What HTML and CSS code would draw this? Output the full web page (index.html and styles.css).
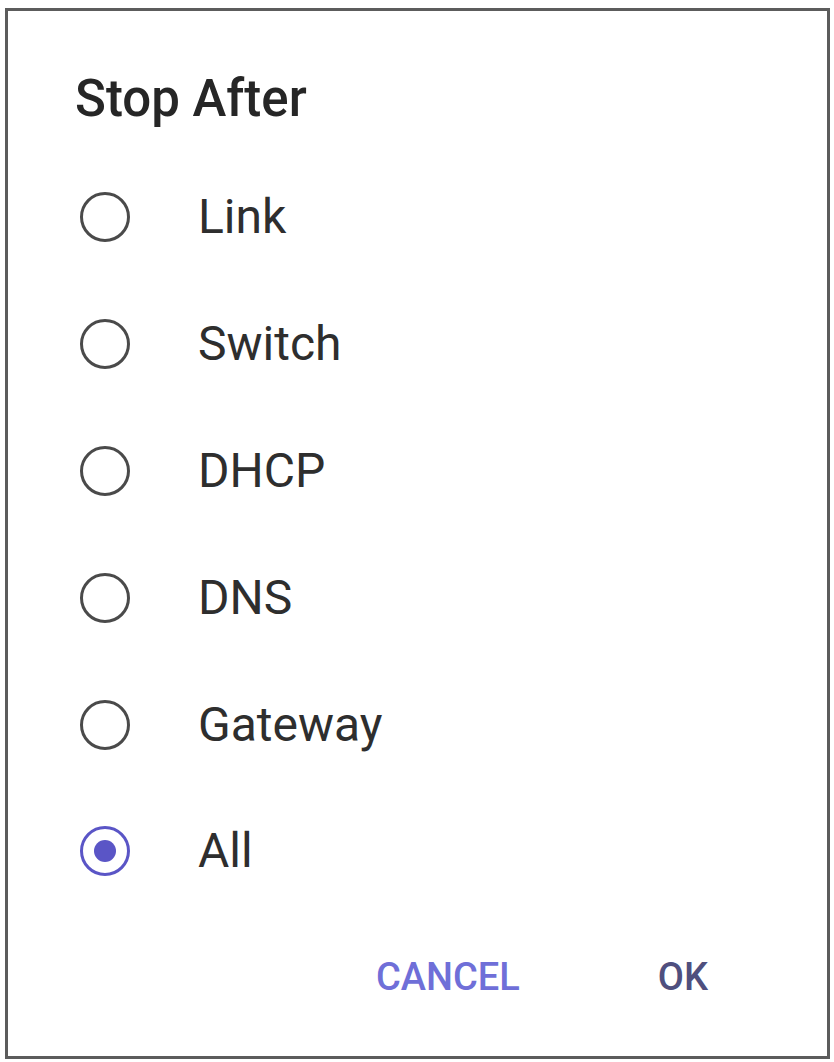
FILE: index.html
```html
<!DOCTYPE html>
<html lang="en">
<head>
<meta charset="utf-8">
<title>Stop After</title>
<link rel="stylesheet" href="styles.css">
</head>
<body>
<div class="dialog">
  <h1 class="title">Stop After</h1>
  <ul class="options">
    <li class="option"><span class="radio"></span><span class="label">Link</span></li>
    <li class="option"><span class="radio"></span><span class="label">Switch</span></li>
    <li class="option"><span class="radio"></span><span class="label">DHCP</span></li>
    <li class="option"><span class="radio"></span><span class="label">DNS</span></li>
    <li class="option"><span class="radio"></span><span class="label">Gateway</span></li>
    <li class="option"><span class="radio checked"></span><span class="label">All</span></li>
  </ul>
  <div class="actions">
    <span class="btn cancel">CANCEL</span>
    <span class="btn ok">OK</span>
  </div>
</div>
</body>
</html>
```

FILE: styles.css
```css
* { box-sizing: border-box; }
html, body { margin: 0; padding: 0; background: #fff; }
body { font-family: Roboto, "Noto Sans", sans-serif; }

.dialog {
  margin: 8px 4px 0 5px;
  height: 1051px;
  border: 3px solid #5c5c5c;
  display: flex;
  flex-direction: column;
  padding: 60px 0 0 72px;
}

.title {
  margin: 0 0 0 -5px;
  font-size: 51px;
  line-height: 56px;
  font-weight: 500;
  color: #262626;
}

.options {
  list-style: none;
  margin: 27px 0 0;
  padding: 0;
}

.option {
  height: 126.8px;
  display: flex;
  align-items: center;
}

.radio {
  width: 50px;
  height: 50px;
  border: 3.5px solid #4a4a4a;
  border-radius: 50%;
  flex: none;
  display: flex;
  align-items: center;
  justify-content: center;
}

.radio.checked {
  border-color: #5a55c6;
}
.radio.checked::after {
  content: "";
  width: 22px;
  height: 22px;
  border-radius: 50%;
  background: #5a55c6;
}

.label {
  margin-left: 68px;
  font-size: 48px;
  line-height: 56px;
  color: #2e2e2e;
}

.actions {
  margin-top: auto;
  display: flex;
  justify-content: flex-end;
  gap: 138px;
  padding: 0 119px 55px 0;
}

.btn {
  font-size: 38px;
  line-height: 48px;
  font-weight: 500;
  letter-spacing: 0;
}
.cancel { color: #6f6fd8; }
.ok { color: #4f4f7e; }
```
